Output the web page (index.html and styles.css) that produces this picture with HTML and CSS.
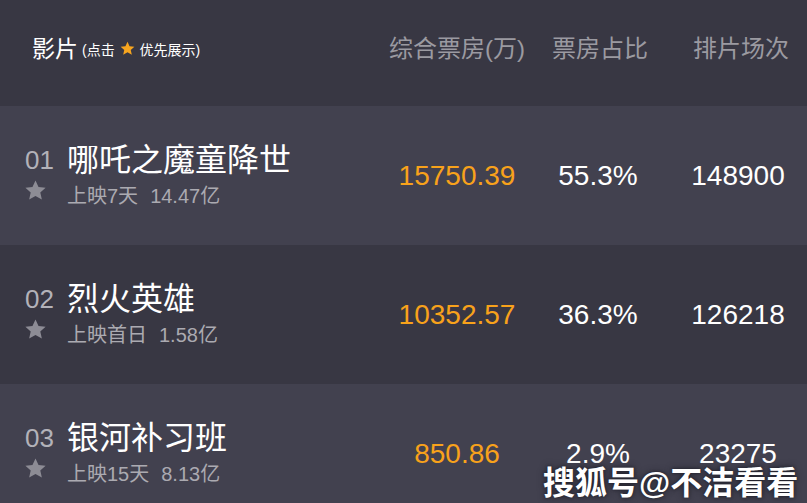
FILE: index.html
```html
<!DOCTYPE html>
<html lang="zh">
<head>
<meta charset="utf-8">
<title>票房</title>
<link rel="stylesheet" href="styles.css">
</head>
<body>
<div class="board">
  <div class="head">
    <div class="head-film"><span class="head-title">影片</span><span class="head-hint">(点击 <svg class="hint-star" viewBox="0 0 24 24"><path d="M12 2.5l2.9 6.2 6.8.7-5.1 4.6 1.5 6.7L12 17.3l-6.1 3.4 1.5-6.7-5.1-4.6 6.8-.7z"/></svg> 优先展示)</span></div>
    <div class="head-col">综合票房(万)</div>
    <div class="head-col head-mid">票房占比</div>
    <div class="head-col head-last">排片场次</div>
  </div>

  <div class="row row-odd">
    <div class="film">
      <div class="rank">01</div>
      <div class="title">哪吒之魔童降世</div>
      <svg class="star" viewBox="0 0 24 24"><path d="M12 2.5l2.9 6.2 6.8.7-5.1 4.6 1.5 6.7L12 17.3l-6.1 3.4 1.5-6.7-5.1-4.6 6.8-.7z"/></svg>
      <div class="sub"><span>上映7天</span><span class="total">14.47亿</span></div>
    </div>
    <div class="num box">15750.39</div>
    <div class="num">55.3%</div>
    <div class="num">148900</div>
  </div>

  <div class="row row-even">
    <div class="film">
      <div class="rank">02</div>
      <div class="title">烈火英雄</div>
      <svg class="star" viewBox="0 0 24 24"><path d="M12 2.5l2.9 6.2 6.8.7-5.1 4.6 1.5 6.7L12 17.3l-6.1 3.4 1.5-6.7-5.1-4.6 6.8-.7z"/></svg>
      <div class="sub"><span>上映首日</span><span class="total">1.58亿</span></div>
    </div>
    <div class="num box">10352.57</div>
    <div class="num">36.3%</div>
    <div class="num">126218</div>
  </div>

  <div class="row row-odd">
    <div class="film">
      <div class="rank">03</div>
      <div class="title">银河补习班</div>
      <svg class="star" viewBox="0 0 24 24"><path d="M12 2.5l2.9 6.2 6.8.7-5.1 4.6 1.5 6.7L12 17.3l-6.1 3.4 1.5-6.7-5.1-4.6 6.8-.7z"/></svg>
      <div class="sub"><span>上映15天</span><span class="total">8.13亿</span></div>
    </div>
    <div class="num box">850.86</div>
    <div class="num">2.9%</div>
    <div class="num">23275</div>
  </div>
</div>
<div class="watermark">搜狐号@不洁看看</div>
</body>
</html>
```

FILE: styles.css
```css
html, body {
  margin: 0;
  padding: 0;
}
body {
  width: 807px;
  height: 503px;
  overflow: hidden;
  position: relative;
  background: #383743;
  font-family: "Liberation Sans", "Noto Sans CJK SC", sans-serif;
  color: #ffffff;
}
.board {
  display: flex;
  flex-direction: column;
}
.head {
  display: grid;
  grid-template-columns: 387px 140px 142px 138px;
  align-items: center;
  height: 106px;
  padding-bottom: 13px;
  box-sizing: border-box;
  background: #383743;
}
.head-film {
  padding-left: 32px;
  display: flex;
  align-items: center;
}
.head-title {
  font-size: 23px;
  color: #ffffff;
}
.head-hint {
  font-size: 14px;
  color: #ffffff;
  margin-left: 4px;
  margin-top: 4px;
  display: flex;
  align-items: center;
  white-space: pre;
}
.hint-star {
  width: 17px;
  height: 17px;
  fill: #f7a51f;
}
.head-col {
  font-size: 24px;
  color: #9b9aa1;
  text-align: center;
}
.head-mid {
  padding-left: 4px;
}
.head-last {
  padding-left: 6px;
}
.row {
  display: grid;
  grid-template-columns: 387px 140px 142px 138px;
  align-items: center;
  height: 139px;
}
.row-odd {
  background: #42414f;
}
.row-even {
  background: #383743;
}
.film {
  display: grid;
  grid-template-columns: 42px auto;
  grid-template-rows: 36px 28px;
  row-gap: 4px;
  align-items: center;
  padding-left: 25px;
}
.rank {
  font-size: 26px;
  color: #b3b2b9;
  line-height: 36px;
}
.title {
  font-size: 32px;
  line-height: 36px;
  color: #ffffff;
  white-space: nowrap;
}
.star {
  width: 25px;
  height: 25px;
  margin-left: -2px;
  margin-top: -10px;
  fill: #8d8c95;
}
.sub {
  font-size: 20px;
  line-height: 28px;
  color: #abaab1;
  white-space: nowrap;
}
.total {
  margin-left: 12px;
}
.num {
  font-size: 28px;
  text-align: center;
  color: #ffffff;
}
.box {
  color: #f8a21b;
}
.watermark {
  position: absolute;
  left: 543px;
  top: 457px;
  font-size: 32px;
  font-weight: bold;
  color: #ffffff;
  white-space: nowrap;
  text-shadow: 0 0 3px rgba(30, 30, 40, 0.9), 0 0 7px rgba(30, 30, 40, 0.8);
}
```
